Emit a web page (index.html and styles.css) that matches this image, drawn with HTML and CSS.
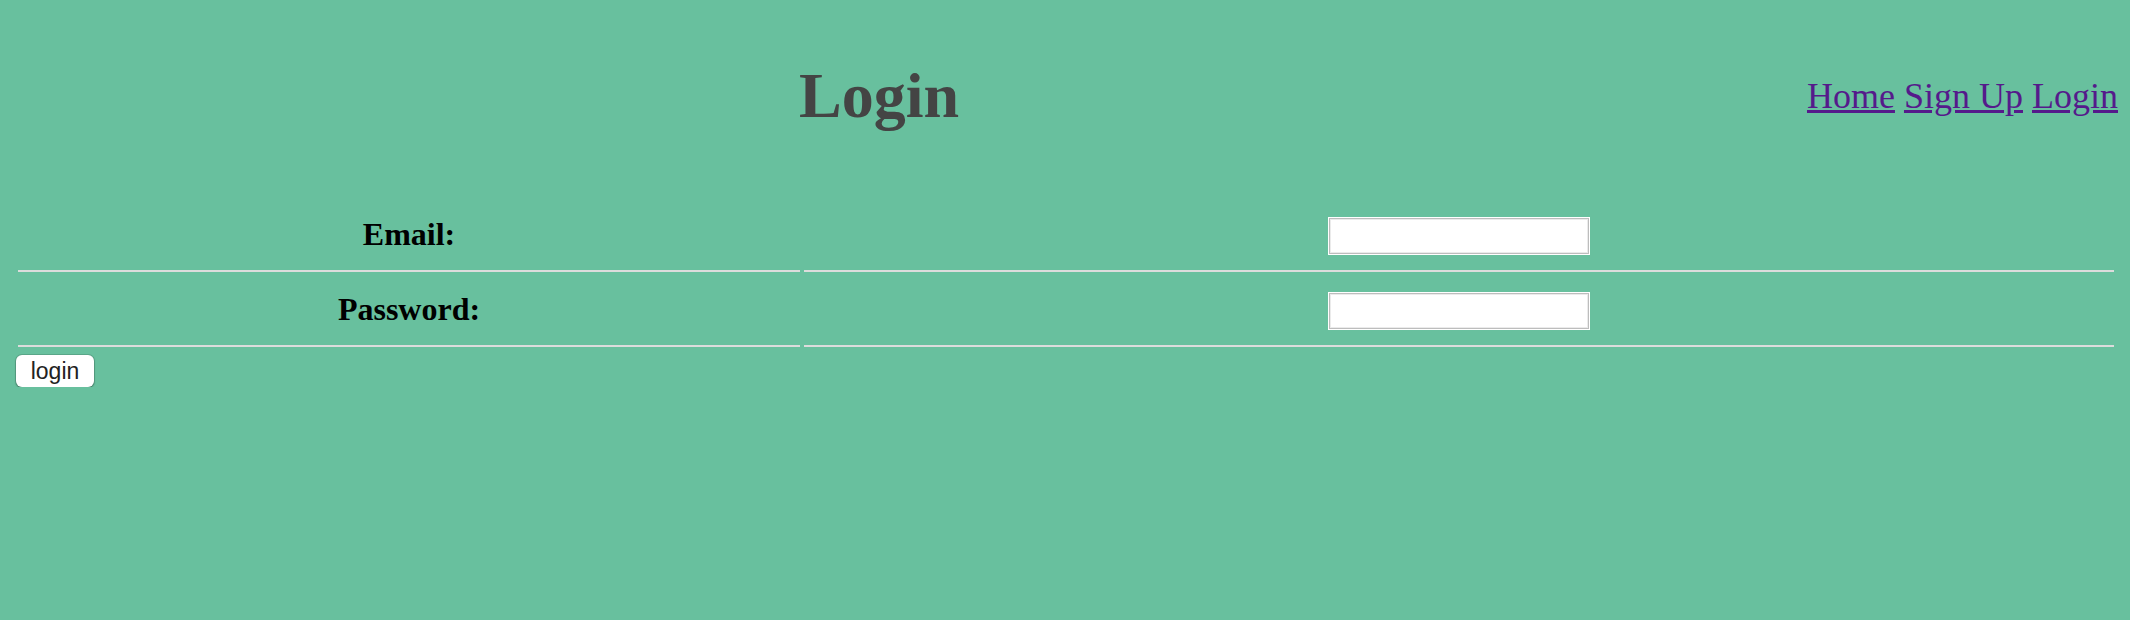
FILE: index.html
```html
<!DOCTYPE html>
<html>
<head>
<meta charset="utf-8">
<title>Login</title>
<link rel="stylesheet" href="styles.css">
</head>
<body>
<header class="top">
  <h1 class="title">Login</h1>
  <nav class="nav"><a href="#">Home</a> <a href="#">Sign Up</a> <a href="#">Login</a></nav>
</header>
<form class="form">
  <table class="grid">
    <tr>
      <th class="label">Email:</th>
      <td class="field"><input class="box" type="text"></td>
    </tr>
    <tr>
      <th class="label">Password:</th>
      <td class="field"><input class="box" type="password"></td>
    </tr>
  </table>
  <button class="btn" type="button">login</button>
</form>
</body>
</html>
```

FILE: styles.css
```css
html, body {
  margin: 0;
  padding: 0;
}
html {
  background: #68c09e;
}
body {
  background: #68c09e;
  font-family: "Liberation Serif", "Times New Roman", serif;
  color: #000;
}
.top {
  display: flex;
  align-items: flex-start;
  height: 197px;
  padding: 0 12px 0 16px;
}
.title {
  margin: 59px 0 0;
  width: 1726px;
  text-align: center;
  font-size: 64px;
  line-height: normal;
  font-weight: bold;
  color: #444444;
}
.nav {
  margin: 75px 0 0 auto;
  font-size: 36px;
  line-height: normal;
  white-space: nowrap;
}
.nav a {
  color: #551a8b;
  text-decoration: underline;
}
.form {
  margin: 0;
}
.grid {
  margin-left: 14px;
  width: 2104px;
  border-spacing: 4px;
  table-layout: fixed;
}
.label {
  width: 782px;
  padding: 0 0 3px;
  height: 66px;
  font-size: 32px;
  font-weight: bold;
  text-align: center;
  vertical-align: middle;
  border-bottom: 2px solid #dcdcdc;
}
.field {
  padding: 0;
  height: 69px;
  text-align: center;
  vertical-align: middle;
  border-bottom: 2px solid #dcdcdc;
}
.box {
  display: inline-block;
  vertical-align: middle;
  box-sizing: border-box;
  width: 260px;
  height: 36px;
  margin: 1px;
  padding: 0;
  border: 1px solid #bdbdbd;
  background: #fff;
  box-shadow: 0 0 0 1px #ffffff, inset 0 0 0 1px #ebebeb;
  outline: none;
}
.btn {
  display: block;
  margin: 4px 0 0 16px;
  box-sizing: border-box;
  width: 78px;
  height: 32px;
  padding: 0;
  border: none;
  border-radius: 6px;
  background: #ffffff;
  box-shadow: 0 0 0 1px rgba(0, 0, 0, 0.12), 0 1px 2px rgba(0, 0, 0, 0.35);
  font-family: "Liberation Sans", Arial, sans-serif;
  font-size: 23px;
  line-height: 30px;
  color: #222222;
}
```
